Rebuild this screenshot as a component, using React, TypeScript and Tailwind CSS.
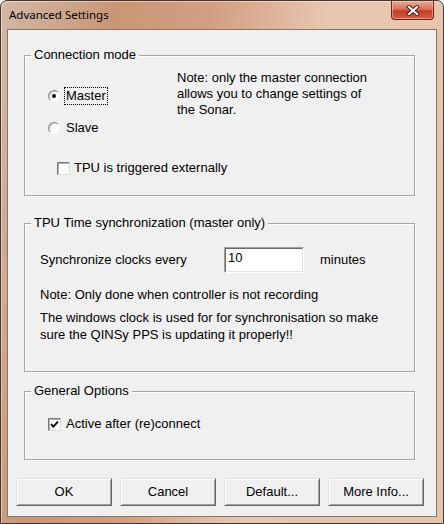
import React from "react";

const font = { fontFamily: '"Liberation Sans", Arial, sans-serif' };

function GroupBox({ title, className, children }: { title: string; className: string; children: React.ReactNode }) {
  return (
    <div className={`relative ml-[16px] w-[391px] border border-[#a5a5a5] shadow-[1px_1px_0_#ffffff,inset_1px_1px_0_#ffffff] ${className}`}>
      <span className="absolute left-[6px] top-[-9px] bg-[#f0f0f0] px-[3px] text-[13px] leading-[16px] text-black">
        {title}
      </span>
      {children}
    </div>
  );
}

function Radio({ checked }: { checked?: boolean }) {
  return (
    <span className="flex h-[12px] w-[12px] shrink-0 items-center justify-center rounded-full border border-t-[#8a8a8a] border-l-[#8a8a8a] border-b-[#f4f4f4] border-r-[#f4f4f4] bg-white shadow-[inset_1px_1px_0_#c8c8c8]">
      {checked && <span className="h-[4px] w-[4px] rounded-full bg-black" />}
    </span>
  );
}

function Checkbox({ checked }: { checked?: boolean }) {
  return (
    <span className="flex h-[13px] w-[13px] shrink-0 items-center justify-center border border-t-[#7a7a7a] border-l-[#7a7a7a] border-b-[#dcdcdc] border-r-[#dcdcdc] bg-white shadow-[inset_1px_1px_0_#b0b0b0]">
      {checked && (
        <svg width="9" height="9" viewBox="0 0 9 9">
          <path d="M1 4 L3.3 6.6 L8 1.6" fill="none" stroke="#000" strokeWidth="1.8" />
        </svg>
      )}
    </span>
  );
}

function Button({ label }: { label: string }) {
  return (
    <button
      type="button"
      className="h-[28px] w-[96px] border border-t-[#e3e3e3] border-l-[#e3e3e3] border-b-[#696969] border-r-[#696969] bg-[#f0f0f0] text-[13px] text-black shadow-[inset_1px_1px_0_#ffffff,inset_-1px_-1px_0_#a0a0a0]"
    >
      {label}
    </button>
  );
}

export default function App() {
  return (
    <div className="h-[524px] w-[444px] bg-white" style={font}>
      <div className="flex h-[524px] w-[444px] flex-col rounded-t-[7px] border border-[#4a3428] bg-[linear-gradient(100deg,#d3b8a6_0%,#c99676_22%,#d29f80_40%,#e8c7b1_62%,#e6c3ab_100%)] shadow-[inset_1px_1px_0_rgba(255,255,255,0.45)]">
        <div className="flex h-[28px] items-start">
          <span
            className="pl-[8px] pt-[6px] text-[11.5px] leading-[16px] text-black"
            style={{ fontFamily: '"Noto Sans", "Open Sans", sans-serif' }}
          >
            Advanced Settings
          </span>
          <div className="ml-auto mr-[9px] flex h-[19px] w-[43px] items-center justify-center rounded-b-[4px] border border-t-0 border-[#6b2418] bg-[linear-gradient(180deg,#e9ab98_0%,#d9715c_45%,#c23c24_55%,#d2604a_100%)] shadow-[inset_0_0_0_1px_rgba(255,220,210,0.45)]">
            <svg width="14" height="11" viewBox="0 0 14 11">
              <path d="M3 2 L11 9 M11 2 L3 9" stroke="#4a1a10" strokeWidth="4" strokeLinecap="square" />
              <path d="M3 2 L11 9 M11 2 L3 9" stroke="#ffffff" strokeWidth="2.2" strokeLinecap="square" />
            </svg>
          </div>
        </div>

        <div className="mx-[6px] flex h-[488px] flex-col border border-[#85766c] bg-[#f0f0f0] text-[13px] text-black">
          <div className="mt-[25px]" />

          <GroupBox title="Connection mode" className="h-[141px]">
            <div className="flex">
              <div className="flex w-[152px] flex-col pl-[23px] pt-[31px]">
                <div className="flex h-[18px] items-center">
                  <Radio checked />
                  <span className="ml-[4px] flex h-[18px] items-center border border-dotted border-black px-[1px] leading-[16px]">
                    Master
                  </span>
                </div>
                <div className="mt-[14px] flex h-[18px] items-center">
                  <Radio />
                  <span className="ml-[4px] flex h-[18px] items-center border border-transparent px-[1px] leading-[16px]">
                    Slave
                  </span>
                </div>
                <div className="ml-[9px] mt-[22px] flex h-[18px] w-[300px] items-center">
                  <Checkbox />
                  <span className="ml-[4px] leading-[16px]">TPU is triggered externally</span>
                </div>
              </div>
              <p className="pt-[14px] leading-[16px]">
                Note: only the master connection
                <br />
                allows you to change settings of
                <br />
                the Sonar.
              </p>
            </div>
          </GroupBox>

          <div className="mt-[27px]" />

          <GroupBox title="TPU Time synchronization (master only)" className="h-[149px]">
            <div className="flex flex-col pl-[15px] pt-[23px]">
              <div className="flex h-[26px] items-center">
                <span className="w-[184px] leading-[16px]">Synchronize clocks every</span>
                <div className="h-[26px] w-[80px] border border-t-[#a0a0a0] border-l-[#a0a0a0] border-b-white border-r-white">
                  <div className="h-full w-full border border-t-[#696969] border-l-[#696969] border-b-[#e3e3e3] border-r-[#e3e3e3] bg-white pl-[2px] pt-[1px] leading-[16px]">
                    10
                  </div>
                </div>
                <span className="ml-[16px] leading-[16px]">minutes</span>
              </div>
              <p className="mt-[13px] leading-[17px]">Note: Only done when controller is not recording</p>
              <p className="mt-[6px] leading-[17px]">
                The windows clock is used for for synchronisation so make
                <br />
                sure the QINSy PPS is updating it properly!!
              </p>
            </div>
          </GroupBox>

          <div className="mt-[19px]" />

          <GroupBox title="General Options" className="h-[69px]">
            <div className="mt-[23px] flex h-[18px] items-center pl-[23px]">
              <Checkbox checked />
              <span className="ml-[5px] leading-[16px]">Active after (re)connect</span>
            </div>
          </GroupBox>

          <div className="ml-[8px] mt-[18px] flex gap-[8px]">
            <Button label="OK" />
            <Button label="Cancel" />
            <Button label="Default..." />
            <Button label="More Info..." />
          </div>
        </div>
      </div>
    </div>
  );
}
